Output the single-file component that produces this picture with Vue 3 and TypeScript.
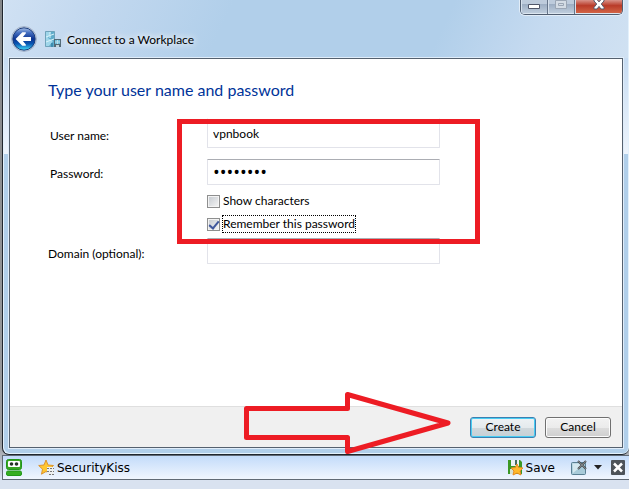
<script setup lang="ts">
import { ref } from 'vue'

const userName = ref('vpnbook')
const password = ref('password')
const domain = ref('')
const showCharacters = ref(false)
const rememberPassword = ref(true)
</script>

<template>
  <div class="desktop">
    <main class="window">
      <header class="titlebar">
        <button class="back" type="button" aria-label="Back">
          <svg width="26" height="26" viewBox="0 0 26 26">
            <defs>
              <linearGradient id="orb" x1="0" y1="0" x2="0" y2="1">
                <stop offset="0" stop-color="#a9c1e6" />
                <stop offset=".22" stop-color="#456fc0" />
                <stop offset=".5" stop-color="#0a3190" />
                <stop offset=".72" stop-color="#0a59b4" />
                <stop offset="1" stop-color="#43e0fa" />
              </linearGradient>
            </defs>
            <circle cx="13" cy="13" r="12.4" fill="#e6eef8" stroke="#8c9cb6" stroke-width=".8" />
            <circle cx="13" cy="13" r="11.2" fill="url(#orb)" stroke="#1b3d7c" />
            <path d="M4.600 13 11.300 6.300h3.500v1.200L11.900 11H20v4h-8.100l2.900 3.500v1.200h-3.500z" fill="#fff" />
          </svg>
        </button>
        <svg class="site" width="17" height="17" viewBox="0 0 17 17">
          <path d="M.5.5h9v15h-9z" fill="#5faccb" stroke="#6fa3bb" />
          <path d="M1 1h5L3 7l5 3-4 5H1z" fill="#9fd6ea" />
          <path d="M1 6 9 3M1 11l8-3M5 1v6" stroke="#d8f3fa" fill="none" />
          <path d="M6 12h2v4H6z" fill="#3e8db0" />
          <path d="M9 8h7v8H9z" fill="#526a77" />
          <path d="M10 9h5v4h-5z" fill="#70bdd9" />
          <path d="M10 11h5M12.500 9v4" stroke="#b8deeb" />
          <path d="M11 14h3v2h-3z" fill="#c3d4da" />
        </svg>
        <h1>Connect to a Workplace</h1>
        <div class="caption">
          <button type="button" aria-label="Minimize">
            <svg width="12" height="6" viewBox="0 0 12 6"><path d="M.5.5h11v4H.5z" fill="#fff" stroke="#50576a" /></svg>
          </button>
          <button type="button" aria-label="Maximize" disabled>
            <svg width="12" height="10" viewBox="0 0 12 10"><path d="M.5.5h11v8H.5zM3.500 3.500h5v2h-5z" fill="#d4dce5" stroke="#9ba6b5" /></svg>
          </button>
          <button class="close" type="button" aria-label="Close">
            <svg width="12" height="11" viewBox="0 0 12 11"><path d="M1 .5h3l2 2.400 2-2.400h3v1.500L8.300 5 11 8.500V10H8L6 7.400 4 10H1V8.500L3.700 5 1 2z" fill="#fff" stroke="#565a6c" /></svg>
          </button>
        </div>
      </header>

      <form class="panel" @submit.prevent>
        <section class="body">
          <h2>Type your user name and password</h2>
          <div class="fields">
            <label class="inset" for="user">User name:</label>
            <input id="user" v-model="userName" class="text tall" type="text" />
            <label class="inset" for="pass">Password:</label>
            <input id="pass" v-model="password" class="text" :type="showCharacters ? 'text' : 'password'" />
            <div class="checks">
              <label class="check"><input v-model="showCharacters" type="checkbox" /><span>Show characters</span></label>
              <label class="check"><input v-model="rememberPassword" type="checkbox" /><span class="focused">Remember this password</span></label>
            </div>
            <label for="domain">Domain (optional):</label>
            <input id="domain" v-model="domain" class="text" type="text" />
            <div class="highlight"></div>
          </div>
        </section>
        <footer class="actions">
          <svg class="arrow" width="214" height="66" viewBox="0 0 214 66">
            <path d="M6.500 18.500h101v-14L208 33 107.500 61.500v-14H6.500z" fill="none" stroke="#ed1c24" stroke-width="5" stroke-linejoin="round" />
          </svg>
          <button class="push primary" type="submit">Create</button>
          <button class="push" type="button">Cancel</button>
        </footer>
      </form>
    </main>

    <nav class="toolbar" aria-label="Form filler">
      <button class="tool" type="button" aria-label="Menu">
        <svg width="16" height="17" viewBox="0 0 16 17">
          <rect x=".5" y=".5" width="15" height="10" rx="2" fill="#39a522" stroke="#20951a" />
          <rect x="2" y="2" width="12" height="6" rx="1" fill="#fff" />
          <circle cx="5.500" cy="5" r="1.800" fill="#243224" /><circle cx="10.500" cy="5" r="1.800" fill="#243224" />
          <rect x=".5" y="12" width="15" height="4.500" rx="1.500" fill="#35ad21" stroke="#229819" />
        </svg>
      </button>
      <button class="tool site-name" type="button">
        <svg width="17" height="17" viewBox="0 0 17 17">
          <path d="m8 1 2 5 5.500.5-4 3.700 1.200 5L8 12.500l-4.500 2.700 1-5L.7 6.500 6 6z" fill="#ffc72f" stroke="#dc942e" />
          <path d="M9 8h7v8H9z" fill="#eef0f0" />
          <path d="M9 9.500h7M9 12.500h7M11 15.500h5" stroke="#777" stroke-dasharray="2 1" />
        </svg>
        SecurityKiss
      </button>
      <button class="tool save" type="button">
        <svg width="17" height="17" viewBox="0 0 17 17">
          <path d="M1 1h12l2 2v12H1z" fill="#3b9825" />
          <path d="M4 1h8v6H4z" fill="#edf2f4" /><path d="M8 1h2v5H8z" fill="#466b5e" />
          <path d="M3 10h5v5H3z" fill="#d6e2d2" />
          <path d="m10 5 1.700 3.500 4.300.5-3 3 1 4-4-2-4 2 1-4-3-3 4.300-.5z" fill="#ffb92b" stroke="#e88a21" />
        </svg>
        Save
      </button>
      <button class="tool edit" type="button" aria-label="Form options">
        <svg width="17" height="15" viewBox="0 0 17 15">
          <rect x=".5" y="2.500" width="14" height="12" rx="1" fill="#a8cbd9" stroke="#597f93" />
          <path d="M1.500 3.500h12L2 13z" fill="#d4e8ef" />
          <path d="m7 1 8 8M15 1 7 9" stroke="#4b4f52" stroke-width="2" />
          <path d="m7 1 8 8M15 1 7 9" stroke="#a0a4a6" stroke-width=".6" />
        </svg>
        <svg width="8" height="5" viewBox="0 0 8 5"><path d="M0 0h8L4 4.500z" fill="#222" /></svg>
      </button>
      <button class="tool" type="button" aria-label="Close toolbar">
        <svg width="14" height="15" viewBox="0 0 14 15">
          <rect width="14" height="15" rx="1" fill="#4d5359" />
          <path d="m3 3.500 8 8M11 3.500l-8 8" stroke="#fff" stroke-width="2.500" />
        </svg>
      </button>
    </nav>
  </div>
</template>

<style>
body {
  margin: 0;
}
</style>

<style scoped>
* {
  box-sizing: border-box;
}
.desktop {
  display: flex;
  flex-direction: column;
  min-height: 100vh;
  padding-bottom: 9px;
  background: linear-gradient(#858789, #9a9c9f 444px, #d9e2f0 478px);
  color: #000;
  font: 12px/16px Lato, "Open Sans", sans-serif;
}
button,
input {
  margin: 0;
  font: inherit;
  color: inherit;
}
svg {
  display: block;
  flex: none;
}
.window {
  display: flex;
  flex: 1;
  flex-direction: column;
  margin-left: 2px;
  padding: 0 6px 6px;
  border: solid #20262e;
  border-width: 0 0 1px 1px;
  border-radius: 0 0 7px 7px;
  background:
    linear-gradient(115deg, #d0e1f3 0, #c2d8ef 90px, #b1cfea 210px, #b1cfea 410px, #c5daf0 500px, #d0e1f2 590px) 0 0 / 100% 58px no-repeat,
    linear-gradient(#c7dcf2 58px, #edf4fc 154px, #b1cfea 154px);
  box-shadow: inset 1px -1px #e3f1fc, inset -1px 0 #e3f1fc;
}
.titlebar {
  display: flex;
  align-items: flex-start;
  height: 58px;
}
.back {
  margin: 26px 8px 0 2px;
  padding: 0;
  border: 0;
  background: none;
}
.site {
  margin-top: 31px;
}
h1 {
  margin: 32px 0 0 5px;
  font-size: 12px;
  font-weight: 400;
  text-shadow: 0 0 6px #fff, 0 0 10px #fff;
}
.caption {
  display: flex;
  height: 15px;
  margin-left: auto;
  border: 1px solid #505d70;
  border-top: 0;
  border-radius: 0 0 5px 5px;
  box-shadow: 0 0 0 1px #e2edf8;
  overflow: hidden;
}
.caption button {
  display: flex;
  align-items: flex-end;
  justify-content: center;
  width: 27px;
  padding: 0 0 4px;
  border: 0;
  border-right: 1px solid #66758a;
  background: linear-gradient(#bdcbdc 25%, #9cadc3 30%, #c2d0df);
  box-shadow: inset 0 -1px #dce6f0, inset 1px 0 #d6e1ed;
}
.caption .close {
  width: 47px;
  border: 0;
  background: linear-gradient(#d9938a, #b93b29 40%, #d66a4a);
}
.panel {
  display: flex;
  flex: 1;
  flex-direction: column;
  border: 1px solid #55616f;
  background: #fff;
  box-shadow: 0 0 0 1px #e0edfa;
}
.body {
  flex: 1;
  padding: 20px 38px 0;
}
h2 {
  margin: 0;
  color: #003399;
  font-size: 16px;
  font-weight: 400;
  line-height: 22px;
}
.fields {
  position: relative;
  display: grid;
  grid-template-columns: 159px minmax(0, 233px);
  align-items: center;
  margin-top: 17px;
}
.fields > label {
  padding-top: 6px;
}
.fields > .inset {
  padding-left: 2px;
}
.text {
  width: 100%;
  height: 26px;
  padding: 0 5px;
  border: 1px solid #e2e3ea;
  border-top-color: #abadb3;
  border-radius: 1px;
  background: #fff;
  outline: 0;
}
.text.tall {
  height: 30px;
  border-top-color: #fff;
}
.text[type="password"] {
  font: 18px/20px "Open Sans", sans-serif;
}
#pass {
  margin: 11px 0 8px;
}
.checks {
  grid-column: 2;
  display: grid;
  gap: 7px;
  margin-bottom: 6px;
}
.check {
  display: flex;
  align-items: center;
  gap: 3px;
  white-space: nowrap;
}
.check input {
  display: grid;
  place-items: center;
  flex: none;
  width: 13px;
  height: 13px;
  appearance: none;
  border: 1px solid #8e8f8f;
  background: linear-gradient(135deg, #c4c9cf, #f6f6f6);
  box-shadow: inset 0 0 0 1px #f4f4f4;
}
.check input:checked::before {
  width: 4px;
  height: 8px;
  margin-bottom: 2px;
  border: solid #40589c;
  border-width: 0 2px 2px 0;
  content: "";
  transform: rotate(40deg);
}
.focused {
  outline: 1px dotted #000;
}
.highlight {
  position: absolute;
  top: 1px;
  left: 129px;
  width: 303px;
  height: 125px;
  border: 5px solid #ed1c24;
  pointer-events: none;
}
.actions {
  position: relative;
  display: flex;
  align-items: center;
  justify-content: flex-end;
  gap: 9px;
  height: 41px;
  padding-right: 11px;
  border-top: 1px solid #dfdfdf;
  background: #f0f0f0;
}
.push {
  width: 66px;
  height: 21px;
  padding: 0;
  border: 1px solid #707070;
  border-radius: 3px;
  background: linear-gradient(#f2f2f2 0, #ebebeb 50%, #dddddd 50%, #cfcfcf);
  box-shadow: inset 0 0 0 1px #fcfcfc;
  line-height: 18px;
}
.push.primary {
  border-color: #3c7fb1;
  background: linear-gradient(#eef2f4 0, #e4eaed 50%, #d0d8dc 50%, #c6d0d5);
  box-shadow: inset 0 0 0 1px #48cdf3;
}
.arrow {
  position: absolute;
  top: -17px;
  left: 230px;
  pointer-events: none;
}
.toolbar {
  display: flex;
  align-items: center;
  height: 25px;
  margin-left: 2px;
  padding: 0 4px 0 3px;
  border: 1px solid #606a75;
  border-right: 0;
  background: linear-gradient(#c3dbfa, #f0f6fe);
  font: 12px/16px "DejaVu Sans", sans-serif;
}
.tool {
  display: flex;
  align-items: center;
  gap: 2px;
  padding: 0;
  border: 0;
  background: none;
}
.site-name {
  margin-left: 16px;
}
.save {
  margin: 0 16px 0 auto;
}
.edit {
  gap: 6px;
  margin-right: 9px;
}
</style>
